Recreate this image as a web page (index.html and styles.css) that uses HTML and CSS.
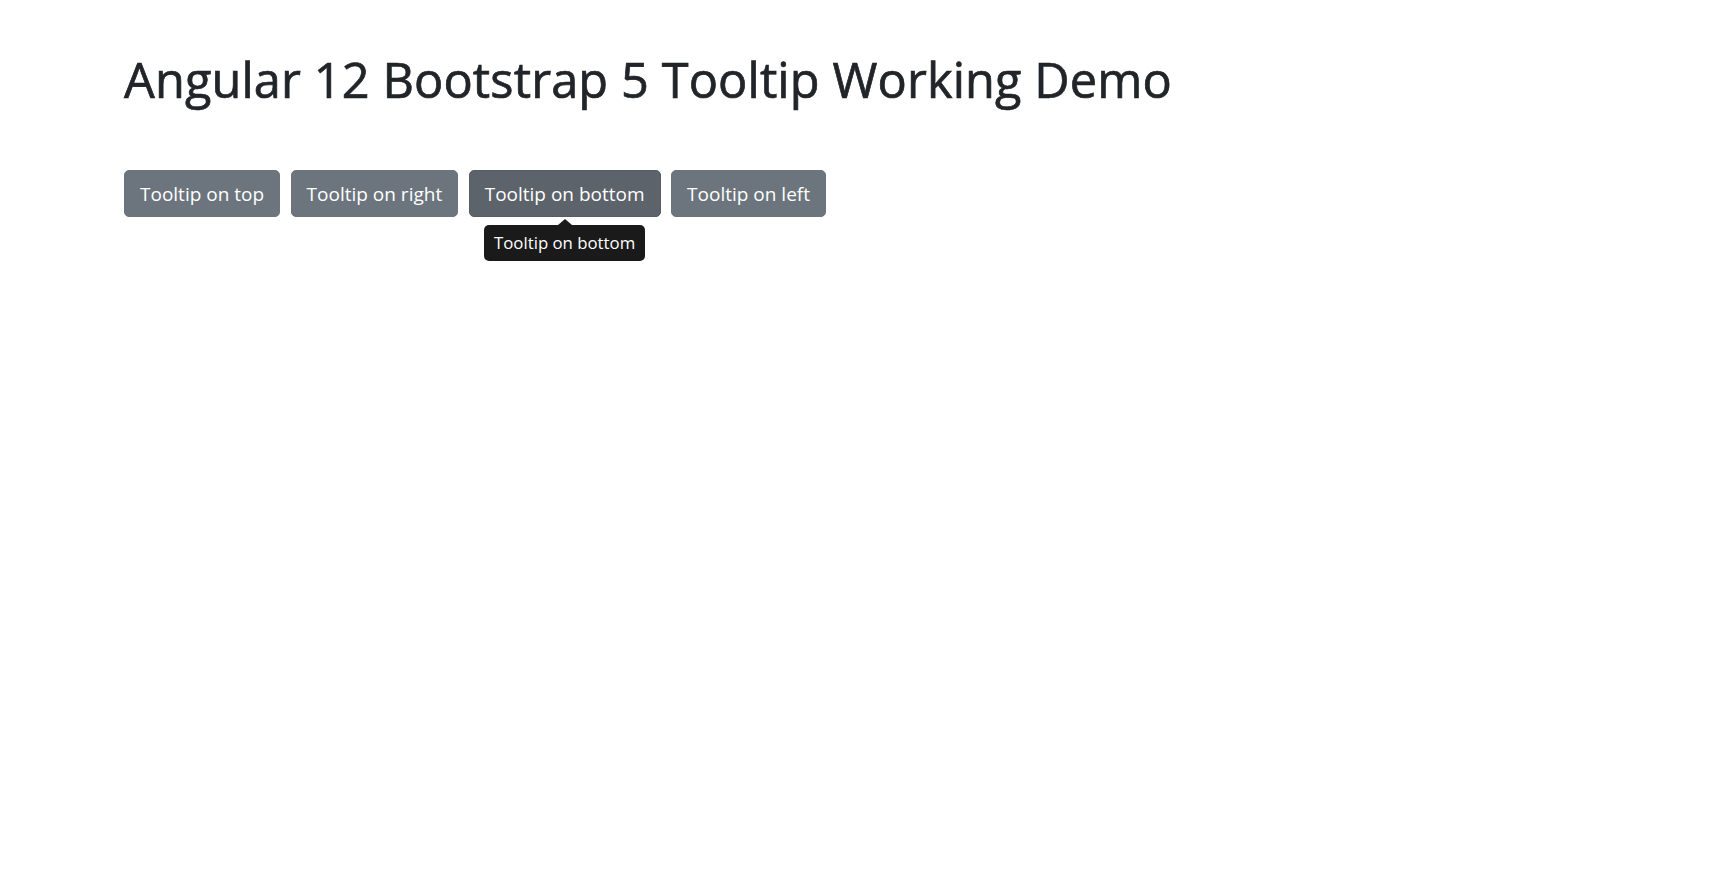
FILE: index.html
```html
<!DOCTYPE html>
<html lang="en">
<head>
<meta charset="utf-8">
<title>Angular 12 Bootstrap 5 Tooltip Working Demo</title>
<link rel="stylesheet" href="styles.css">
</head>
<body>
<div class="container">
  <h1 class="title">Angular 12 Bootstrap 5 Tooltip Working Demo</h1>
  <div class="btn-row">
    <button class="btn" type="button">Tooltip on top</button>
    <button class="btn" type="button">Tooltip on right</button>
    <div class="tip-wrap">
      <button class="btn btn-active" type="button">Tooltip on bottom</button>
      <div class="tip-arrow"></div>
      <div class="tip-box">Tooltip on bottom</div>
    </div>
    <button class="btn" type="button">Tooltip on left</button>
  </div>
</div>
</body>
</html>
```
FILE: styles.css
```css
html, body {
  margin: 0;
  padding: 0;
  background: #fff;
}

body {
  font-family: "Open Sans", "Noto Sans", sans-serif;
  color: #212529;
}

.container {
  padding: 50px 0 0 124px;
}

.title {
  margin: 0 0 61.5px;
  font-size: 48.7px;
  font-weight: 500;
  line-height: 1.2;
  letter-spacing: 0.12px;
  color: #212529;
  -webkit-text-stroke: 0.7px #212529;
}

.btn-row {
  display: flex;
  gap: 10.5px;
  align-items: flex-start;
}

.btn {
  display: inline-block;
  box-sizing: border-box;
  height: 47.5px;
  margin: 0;
  padding: 7.5px 15px;
  font-family: "Open Sans", "Noto Sans", sans-serif;
  font-size: 19px;
  font-weight: 400;
  line-height: 30px;
  color: #fff;
  background: #6c757d;
  border: 1.25px solid #6c757d;
  border-radius: 5px;
  white-space: nowrap;
  cursor: pointer;
}

.btn-active {
  background: #5c636a;
  border-color: #565e64;
}

.tip-wrap {
  display: flex;
  flex-direction: column;
  align-items: center;
}

.tip-arrow {
  width: 0;
  height: 0;
  margin-top: 2px;
  border-left: 7px solid transparent;
  border-right: 7px solid transparent;
  border-bottom: 6px solid #1a1a1a;
}

.tip-box {
  padding: 5px 10px;
  font-family: "Open Sans", "Noto Sans", sans-serif;
  font-size: 16.8px;
  line-height: 26px;
  color: #fff;
  background: #1a1a1a;
  border-radius: 5px;
  white-space: nowrap;
}
```
